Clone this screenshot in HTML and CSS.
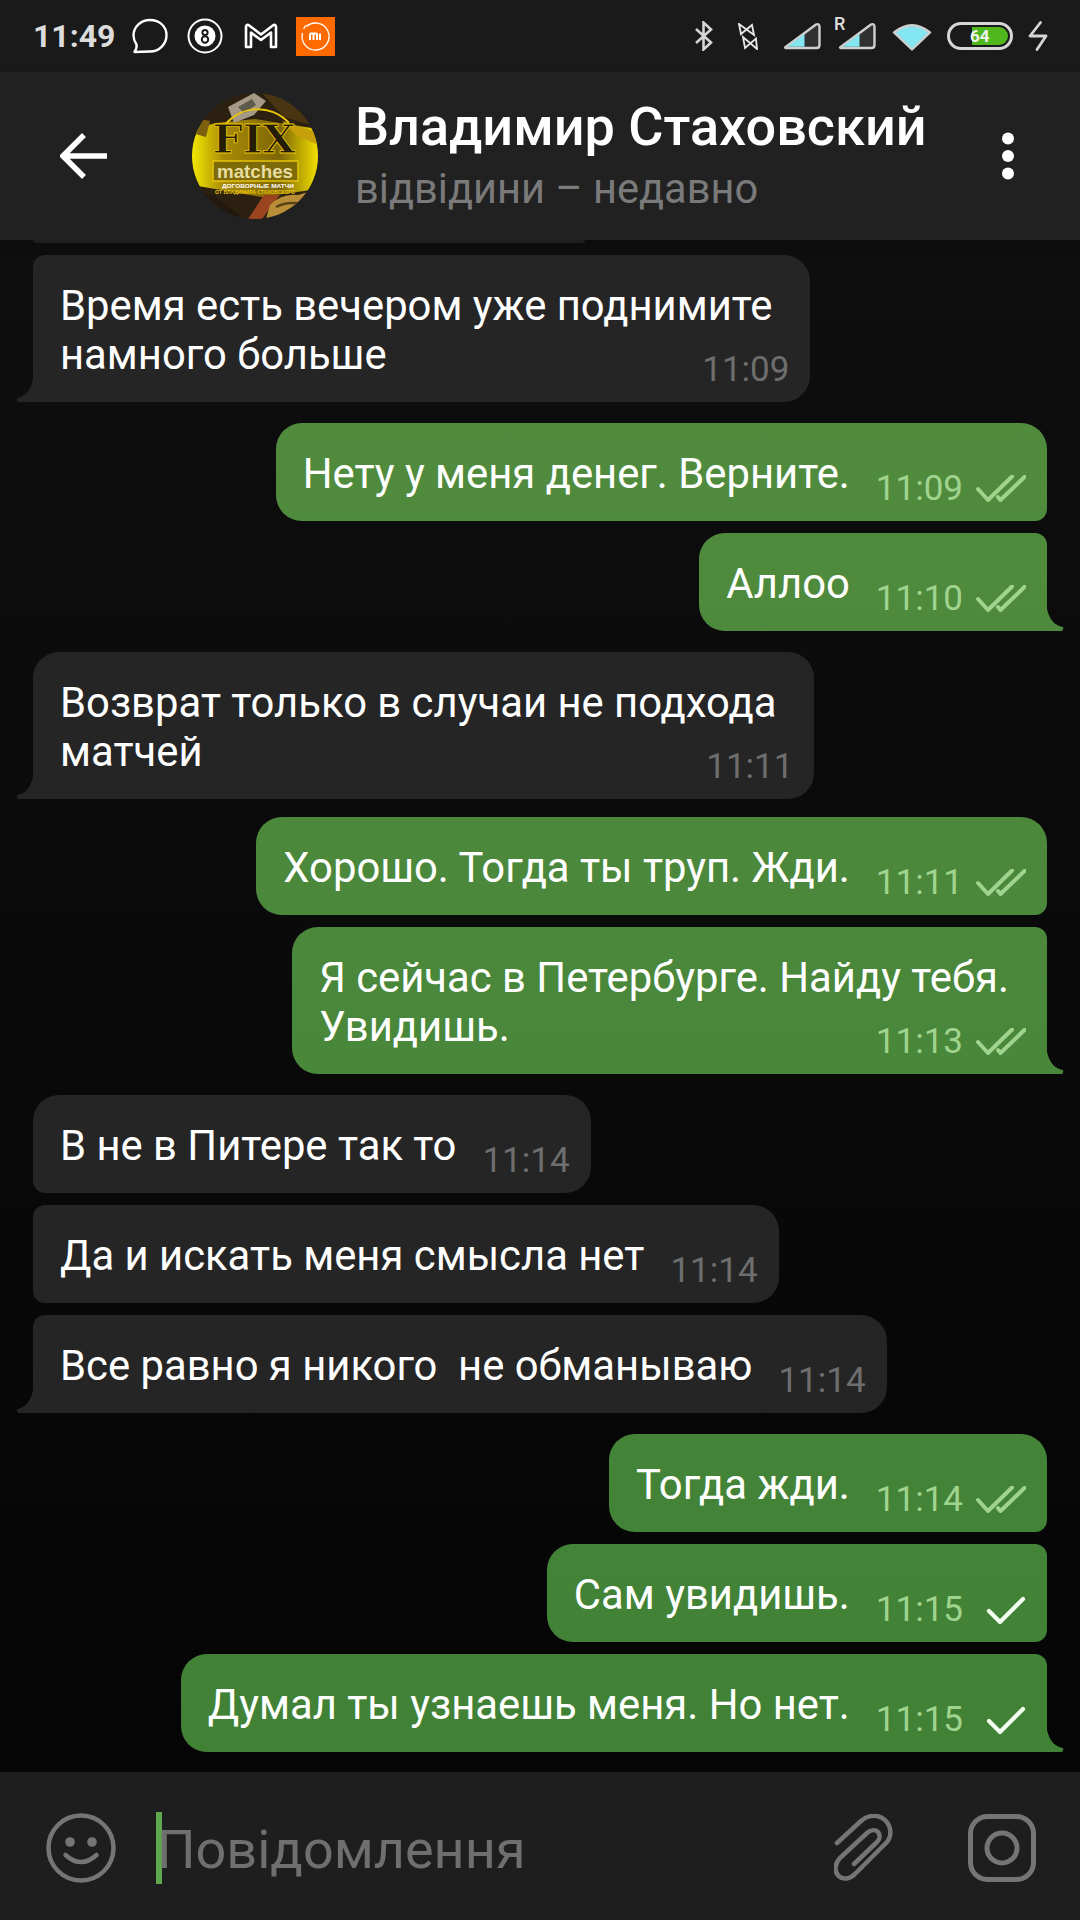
FILE: index.html
```html
<!DOCTYPE html>
<html lang="uk">
<head>
  <meta charset="UTF-8" />
  <title>Чат</title>
  <meta name="viewport" content="width=device-width, initial-scale=1" />
  <link rel="stylesheet" href="styles.css">
</head>
<body>
  <svg class="defs" width="0" height="0">
    <defs>
      <symbol id="check2" viewBox="0 0 50 28">
        <path d="M2 14 L12 25 L36 1.5 M22 22 L24.5 25 L49 1.5" fill="none" stroke="currentColor" stroke-width="4" stroke-linecap="round" stroke-linejoin="round"/>
      </symbol>
      <symbol id="check1" viewBox="0 0 50 28">
        <path d="M13 15 L24 26 L47 3" fill="none" stroke="currentColor" stroke-width="4.2" stroke-linecap="round" stroke-linejoin="round"/>
      </symbol>
    </defs>
  </svg>

  <!-- Status bar -->
  <div class="statusbar">
    <div class="status-left">
      <span class="clock">11:49</span>
      <svg class="ic-bubble" width="36" height="36" viewBox="0 0 36 36"><path d="M18 2 C28 2 34.500 9 34.500 17 C34.500 26 27.500 33.500 18 33.500 L2.500 34 C4.500 31 5 28.500 4.500 26.500 C2.500 23.500 1.500 20.500 1.500 17.500 C1.500 9 8.500 2 18 2 Z" fill="none" stroke="#fff" stroke-width="2.400" stroke-linejoin="round"/></svg>
      <svg class="ic-ball" width="36" height="36" viewBox="0 0 36 36"><circle cx="18" cy="18" r="16.500" fill="none" stroke="#fff" stroke-width="2"/><circle cx="18" cy="18" r="10.500" fill="#fff"/><circle cx="18" cy="14.500" r="2.600" fill="none" stroke="#1a1a1a" stroke-width="2"/><circle cx="18" cy="21.500" r="3.200" fill="none" stroke="#1a1a1a" stroke-width="2"/></svg>
      <svg class="ic-gmail" width="34" height="26" viewBox="0 0 34 26"><path d="M2 24 V4 Q2 1.500 4.500 2 L17 11.500 L29.500 2 Q32 1.500 32 4 V24 H27 V9.500 L17 17 L7 9.500 V24 Z" fill="none" stroke="#fff" stroke-width="2.600" stroke-linejoin="round"/></svg>
      <svg class="ic-mi" width="39" height="39" viewBox="0 0 39 39"><rect width="39" height="39" fill="#ff6a00"/><path d="M10.500 9.500 A13.500 13.500 0 1 1 6.500 16" fill="none" stroke="#fff" stroke-width="1.300"/><path d="M7.500 12 L10 8" stroke="#fff" stroke-width="1.300"/><path d="M14 16.500 H20 Q21 16.500 21 17.500 V23 M17.500 16.500 V23 M14 16.500 V23 M24 16.500 V23" fill="none" stroke="#fff" stroke-width="2"/></svg>
    </div>
    <div class="status-right">
      <svg class="ic-bt" width="20" height="30" viewBox="0 0 20 30"><path d="M2 8 L17 21.500 L9.500 28.500 V1.500 L17 8.500 L2 22" fill="none" stroke="#d6d6d6" stroke-width="2.600"/></svg>
      <svg class="ic-vib" width="20" height="27" viewBox="0 0 20 27"><path d="M1 1 L3 11 L14 2 L16 12 Z M5 14 L7 25 L18 15.500 L19 26 Z" fill="none" stroke="#e8e8e8" stroke-width="1.800" stroke-linejoin="miter"/></svg>
      <svg class="ic-sig" width="39" height="28" viewBox="0 0 39 28"><path d="M3 25.500 L34 2.500 Q37.500 1 37.500 5 V23 Q37.500 26 34.500 26 H3.500 Z" fill="#303030" stroke="#cfcfcf" stroke-width="2.400" stroke-linejoin="round"/><path d="M5.500 24.800 L22.500 12 V24.800 Z" fill="#84e6f0"/></svg>
      <span class="roaming">
        <span class="roaming-r">R</span>
        <svg width="39" height="28" viewBox="0 0 39 28"><path d="M3 25.500 L34 2.500 Q37.500 1 37.500 5 V23 Q37.500 26 34.500 26 H3.500 Z" fill="#303030" stroke="#cfcfcf" stroke-width="2.400" stroke-linejoin="round"/><path d="M5.500 24.800 L22.500 12 V24.800 Z" fill="#84e6f0"/></svg>
      </span>
      <svg class="ic-wifi" width="40" height="30" viewBox="0 0 40 30"><path d="M2 11.500 Q20 -3 38 11.500 L20 28.500 Z" fill="#84e6f0" stroke="#cfcfcf" stroke-width="2.400" stroke-linejoin="round"/></svg>
      <div class="battery"><div class="battery-fill"></div><span class="battery-num">64</span></div>
      <svg class="ic-bolt" width="20" height="30" viewBox="0 0 20 30"><path d="M12.500 1.500 L2 15 H18 L9 28.500" fill="none" stroke="#d6d6d6" stroke-width="2.800" stroke-linecap="round" stroke-linejoin="round"/></svg>
    </div>
  </div>

  <!-- Header -->
  <div class="topbar">
    <svg class="back" width="48" height="46" viewBox="0 0 48 46"><path d="M24 2 L3 23 L24 44 M3 23 H47" fill="none" stroke="#fff" stroke-width="5.500"/></svg>
    <svg class="avatar" width="126" height="126" viewBox="0 0 126 126">
      <defs>
        <linearGradient id="band" x1="0" y1="0" x2="1" y2="0">
          <stop offset="0" stop-color="#f4e800"/>
          <stop offset="0.25" stop-color="#a98a06"/>
          <stop offset="0.7" stop-color="#7f6606"/>
          <stop offset="1" stop-color="#f2e000"/>
        </linearGradient>
        <clipPath id="round"><circle cx="63" cy="63" r="63"/></clipPath>
      </defs>
      <g clip-path="url(#round)">
        <rect width="126" height="126" fill="#2c2110"/>
        <path d="M0 36 L24 30 L63 26 L126 36 V96 L70 104 L0 92 Z" fill="url(#band)"/>
        <path d="M70 0 H126 V34 L92 24 Z" fill="#4a3512"/>
        <path d="M90 28 L126 40 V52 L104 42 Z" fill="#c79f0c"/>
        <path d="M36 14 L62 0 L74 8 L62 22 L42 30 Z" fill="#a59a86"/>
        <path d="M46 14 L60 6 L64 12 L52 20 Z" fill="#5e5a4c"/>
        <path d="M0 24 L18 28 L14 44 L0 40 Z" fill="#7d5f10"/>
        <path d="M28 40 A42 42 0 0 1 97 30" fill="none" stroke="#e7c30a" stroke-width="2"/>
        <path d="M22 102 L52 126 H0 V100 Z" fill="#23190e"/>
        <path d="M56 126 L72 102 L88 102 L70 126 Z" fill="#9a4420"/>
        <path d="M74 126 L78 112 Q90 100 106 102 L126 96 V126 Z" fill="#b88f38"/>
        <path d="M84 114 Q95 108 110 111" fill="none" stroke="#5a4215" stroke-width="2.500"/>
        <text class="av-fix" x="62" y="60" text-anchor="middle" textLength="83" lengthAdjust="spacingAndGlyphs">FIX</text>
        <rect x="21" y="68" width="85" height="20" fill="#7d6a08" stroke="#e7c30a" stroke-width="1.500"/>
        <text class="av-matches" x="63" y="85" text-anchor="middle" textLength="76" lengthAdjust="spacingAndGlyphs">matches</text>
        <text class="av-small" x="66" y="95" text-anchor="middle" textLength="72" lengthAdjust="spacingAndGlyphs">ДОГОВОРНЫЕ МАТЧИ</text>
        <text class="av-small2" x="63" y="101" text-anchor="middle" textLength="80" lengthAdjust="spacingAndGlyphs">ОТ ВЛАДИМИРА СТАХОВСКОГО</text>
      </g>
    </svg>
    <div class="peer">
      <div class="peer-name">Владимир Стаховский</div>
      <div class="peer-status">відвідини – недавно</div>
    </div>
    <svg class="more" width="14" height="48" viewBox="0 0 14 48"><circle cx="7" cy="6.500" r="6"/><circle cx="7" cy="24" r="6"/><circle cx="7" cy="41.500" r="6"/></svg>
  </div>

  <!-- Messages -->
  <div class="chat">
    <div class="peek"></div>

    <div class="msg in multi tail">
      <div class="msg-text">Время есть вечером уже поднимите<br>намного больше</div>
      <div class="meta"><span class="time">11:09</span></div>
    </div>

    <div class="msg out first">
      <div class="msg-text">Нету у меня денег. Верните.</div>
      <div class="meta"><span class="time">11:09</span><svg class="tick read"><use href="#check2"/></svg></div>
    </div>
    <div class="msg out tail">
      <div class="msg-text">Аллоо</div>
      <div class="meta"><span class="time">11:10</span><svg class="tick read"><use href="#check2"/></svg></div>
    </div>

    <div class="msg in multi first tail">
      <div class="msg-text">Возврат только в случаи не подхода<br>матчей</div>
      <div class="meta"><span class="time">11:11</span></div>
    </div>

    <div class="msg out first short-gap">
      <div class="msg-text">Хорошо. Тогда ты труп. Жди.</div>
      <div class="meta"><span class="time">11:11</span><svg class="tick read"><use href="#check2"/></svg></div>
    </div>
    <div class="msg out multi tail">
      <div class="msg-text">Я сейчас в Петербурге. Найду тебя.<br>Увидишь.</div>
      <div class="meta"><span class="time">11:13</span><svg class="tick read"><use href="#check2"/></svg></div>
    </div>

    <div class="msg in first">
      <div class="msg-text">В не в Питере так то</div>
      <div class="meta"><span class="time">11:14</span></div>
    </div>
    <div class="msg in">
      <div class="msg-text">Да и искать меня смысла нет</div>
      <div class="meta"><span class="time">11:14</span></div>
    </div>
    <div class="msg in tail">
      <div class="msg-text">Все равно я никого&nbsp; не обманываю</div>
      <div class="meta"><span class="time">11:14</span></div>
    </div>

    <div class="msg out first">
      <div class="msg-text">Тогда жди.</div>
      <div class="meta"><span class="time">11:14</span><svg class="tick read"><use href="#check2"/></svg></div>
    </div>
    <div class="msg out">
      <div class="msg-text">Сам увидишь.</div>
      <div class="meta"><span class="time">11:15</span><svg class="tick sent"><use href="#check1"/></svg></div>
    </div>
    <div class="msg out tail">
      <div class="msg-text">Думал ты узнаешь меня. Но нет.</div>
      <div class="meta"><span class="time">11:15</span><svg class="tick sent"><use href="#check1"/></svg></div>
    </div>
  </div>

  <!-- Input -->
  <div class="inputbar">
    <svg class="ic-smile" width="70" height="70" viewBox="0 0 70 70"><circle cx="35" cy="35" r="32.500" fill="none" stroke="#757575" stroke-width="4.500"/><circle cx="24" cy="29" r="4.800" fill="#757575"/><circle cx="46" cy="29" r="4.800" fill="#757575"/><path d="M19.500 42 Q35 56 50.500 42" fill="none" stroke="#757575" stroke-width="4.500" stroke-linecap="round"/></svg>
    <div class="field">
      <span class="caret"></span>
      <span class="placeholder">Повідомлення</span>
    </div>
    <svg class="ic-clip" width="60" height="68" viewBox="0 0 60 68"><path d="M3 29 L27 7 C34 0.500 44 0 51 6 C58 13 58 23 52 29 L22 59 C16 65.500 9 66 4.500 62 C0 57 0.500 50 6 44 L33 19 C37 15.500 41.500 15.500 44 18 C46.500 21 46 25 43 28 L20 50" fill="none" stroke="#757575" stroke-width="4.500" stroke-linecap="round" stroke-linejoin="round"/></svg>
    <svg class="ic-cam" width="68" height="68" viewBox="0 0 68 68"><rect x="2.500" y="2.500" width="63" height="63" rx="17" fill="none" stroke="#757575" stroke-width="5"/><circle cx="34" cy="34" r="15" fill="none" stroke="#757575" stroke-width="5"/></svg>
  </div>
</body>
</html>
```

FILE: styles.css
```css
html, body {
  margin: 0; padding: 0; height: 100%; overflow: hidden;
  background: #0a0a0a; font-family: Roboto, 'Noto Sans', sans-serif;
}

body {
  display: flex; flex-direction: column;
  width: 1080px; height: 1920px;
}

.defs { position: absolute; }

svg { display: block; flex: none; }

/* Status bar */
.statusbar {
  height: 72px; flex: none; background: #1a1a1a;
  display: flex; align-items: center; justify-content: space-between;
  padding: 0 32px 0 33px;
}
.status-left, .status-right { display: flex; align-items: center; }
.clock { font-size: 32px; font-weight: 700; color: #dcdcdc; width: 80px; }
.ic-bubble { margin-left: 19px; }
.ic-ball { margin-left: 19px; }
.ic-gmail { margin-left: 21px; }
.ic-mi { margin-left: 18px; }

.ic-vib { margin-left: 24px; }
.ic-sig { margin-left: 24px; }
.roaming { position: relative; margin-left: 16px; display: block; }
.roaming-r {
  position: absolute; left: -3px; top: -8px;
  font-size: 18px; font-weight: 500; line-height: 20px; color: #e0e0e0;
}
.ic-wifi { margin-left: 16px; }
.battery {
  position: relative; width: 66px; height: 28px; margin-left: 15px;
  border: 3px solid #d6d6d6; border-radius: 14px; box-sizing: border-box;
}
.battery-fill {
  position: absolute; left: 22px; top: 2px; bottom: 2px; right: 2px;
  background: #4fb81c; border-radius: 0 10px 10px 0;
}
.battery-num {
  position: absolute; left: 20px; top: 0; line-height: 22px;
  font-size: 17px; font-weight: 700; color: #f2f2f2;
}
.ic-bolt { margin-left: 15px; }

/* Header */
.topbar {
  height: 168px; flex: none; background: #212121;
  display: flex; align-items: center;
  padding: 0 65px 0 60px; box-sizing: border-box;
  position: relative; z-index: 1;
  box-shadow: 0 3px 10px rgba(0,0,0,0.25);
}
.back { margin-right: 84px; }
.avatar { margin-right: 37px; }
.peer { flex: 1; }
.peer-name { font-size: 54px; font-weight: 500; color: #fff; line-height: 58px; }
.peer-status { font-size: 41.6px; color: #7a7a7a; line-height: 50px; margin-top: 8px; }
.more { fill: #fff; }

/* Messages */
.chat {
  flex: 1; min-height: 0; overflow: hidden;
  display: flex; flex-direction: column;
  padding: 0 33px;
  background: linear-gradient(#0e0e0e, #050505);
}
.peek {
  width: 552px; height: 3px; flex: none;
  background: #252525; border-radius: 0 0 20px 20px;
}

.msg {
  position: relative; flex: none;
  display: flex; align-items: flex-end; gap: 26px;
  margin-top: 12px; padding: 26px 21px 23px 27px;
  font-size: 41.8px; line-height: 49px; color: #fff;
  white-space: nowrap; border-radius: 26px;
}
.msg.first { margin-top: 21px; }
.msg.short-gap { margin-top: 18px; }

.msg.in {
  align-self: flex-start; background: #252525;
  border-top-left-radius: 12px; border-bottom-left-radius: 12px;
}
.msg.in.first { border-top-left-radius: 26px; }
.msg.out {
  align-self: flex-end; color: #fff;
  background: linear-gradient(#568f40, #3e8035) fixed;
  border-top-right-radius: 12px; border-bottom-right-radius: 12px;
}
.msg.out.first { border-top-right-radius: 26px; }

.msg.multi { flex-direction: column; align-items: flex-end; gap: 0; }
.msg.multi .msg-text { padding-right: 17px; }
.msg.multi .meta { margin-top: -29px; margin-bottom: -11px; }

.msg.in.tail { border-bottom-left-radius: 0; }
.msg.out.tail { border-bottom-right-radius: 0; }
.msg.tail::after {
  content: ''; position: absolute; bottom: 0; width: 18px; height: 34px;
  background: inherit;
}
.msg.out.tail::after {
  right: -17px;
  clip-path: path("M0 0 C0 16 5 28 17 30 Q18 32 16 34 L0 34 Z");
}
.msg.in.tail::after {
  left: -17px;
  clip-path: path("M18 0 C18 16 13 28 1 30 Q0 32 2 34 L18 34 Z");
}

.meta {
  display: flex; align-items: center; height: 40px; margin-bottom: -11px;
  font-size: 35px; line-height: 40px;
}
.msg.in .time { color: #6e6e6e; }
.msg.out .time { color: #a0d48e; }
.tick { width: 50px; height: 28px; margin-left: 13px; }
.tick.read { color: #a0d48e; }
.tick.sent { color: #f4fff0; }

/* Input */
.inputbar {
  height: 148px; flex: none; background: #1e1e1e;
  display: flex; align-items: center; box-sizing: border-box;
  padding: 4px 44px 0 46px;
}
.field {
  flex: 1; display: flex; align-items: center;
  margin-left: 40px; height: 72px; position: relative;
}
.caret { width: 6px; height: 72px; background: #5fa84e; flex: none; }
.placeholder { font-size: 54px; line-height: 72px; color: #6f6f6f; margin-left: -5px; padding-top: 4px; }
.ic-cam { margin-left: 74px; }

/* Avatar lettering */
.av-fix { font: 700 39px 'DejaVu Serif', serif; fill: #241c06; stroke: #e7c30a; stroke-width: 0.8; }
.av-matches { font: 700 19px 'Liberation Sans', sans-serif; fill: #e8dda0; }
.av-small { font: 700 6px 'Liberation Sans', sans-serif; fill: #fff; }
.av-small2 { font: 700 5px 'Liberation Sans', sans-serif; fill: #e7c30a; }
```
